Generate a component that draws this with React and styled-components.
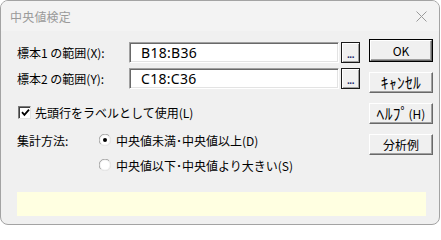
import React, { useState } from "react";
import styled, { createGlobalStyle } from "styled-components";

const GlobalStyle = createGlobalStyle`
  html, body {
    margin: 0;
    padding: 0;
    background: #ffffff;
  }
  * {
    box-sizing: border-box;
  }
`;

const jp = `"Noto Sans CJK JP", "Noto Sans", sans-serif`;

const App = () => {
  const [useLabel, setUseLabel] = useState(true);
  const [method, setMethod] = useState("D");

  return (
    <>
      <GlobalStyle />
      <Window>
        <TitleBar>
          <Title>中央値検定</Title>
          <CloseBtn aria-label="close">
            <svg width="11" height="11" viewBox="0 0 11 11">
              <path d="M0.5 0.5 L10.5 10.5 M10.5 0.5 L0.5 10.5" stroke="#9a9a9a" strokeWidth="1" />
            </svg>
          </CloseBtn>
        </TitleBar>

        <Body>
          <TopSection>
            <FormColumn>
              <FieldRow>
                <FieldLabel>標本1 の範囲(X):</FieldLabel>
                <RangeInput defaultValue="B18:B36" />
                <BrowseBtn>...</BrowseBtn>
              </FieldRow>
              <FieldRow $gap={5}>
                <FieldLabel>標本2 の範囲(Y):</FieldLabel>
                <RangeInput defaultValue="C18:C36" />
                <BrowseBtn>...</BrowseBtn>
              </FieldRow>

              <CheckRow onClick={() => setUseLabel(!useLabel)}>
                <CheckBox>
                  {useLabel && (
                    <svg width="9" height="9" viewBox="0 0 9 9">
                      <path d="M1 4.2 L3.4 6.8 L8 1.6" stroke="#000" strokeWidth="1.8" fill="none" />
                    </svg>
                  )}
                </CheckBox>
                <OptionText>先頭行をラベルとして使用(L)</OptionText>
              </CheckRow>

              <RadioRow $top={12} onClick={() => setMethod("D")}>
                <MethodLabel>集計方法:</MethodLabel>
                <Radio checked={method === "D"} />
                <OptionText>中央値未満･中央値以上(D)</OptionText>
              </RadioRow>
              <RadioRow $top={9} onClick={() => setMethod("S")}>
                <MethodLabel />
                <Radio checked={method === "S"} />
                <OptionText>中央値以下･中央値より大きい(S)</OptionText>
              </RadioRow>
            </FormColumn>

            <ButtonColumn>
              <DefaultFrame>
                <DialogBtn>OK</DialogBtn>
              </DefaultFrame>
              <DialogBtn>
                <Kana>ｷｬﾝｾﾙ</Kana>
              </DialogBtn>
              <DialogBtn>
                <Kana>ﾍﾙﾌﾟ</Kana>(H)
              </DialogBtn>
              <DialogBtn>分析例</DialogBtn>
            </ButtonColumn>
          </TopSection>

          <MessageBox />
        </Body>
      </Window>
    </>
  );
};

const Radio = ({ checked }) => (
  <RadioWrap>
    <svg width="12" height="12" viewBox="0 0 12 12">
      <path d="M10.2 1.8 A5.5 5.5 0 0 0 1.8 10.2" stroke="#a0a0a0" strokeWidth="1" fill="none" />
      <path d="M1.8 10.2 A5.5 5.5 0 0 0 10.2 1.8" stroke="#e3e3e3" strokeWidth="1" fill="none" />
      <circle cx="6" cy="6" r="4.5" fill="#ffffff" />
      {checked && <circle cx="6" cy="6" r="2" fill="#000000" />}
    </svg>
  </RadioWrap>
);

const Window = styled.div`
  width: 440px;
  height: 225px;
  border: 1px solid #a3a3a3;
  border-radius: 8px;
  background: #f0f0f0;
  overflow: hidden;
  display: flex;
  flex-direction: column;
  font-family: ${jp};
  color: #000;
`;

const TitleBar = styled.div`
  height: 30px;
  flex: 0 0 30px;
  background: #f3f3f3;
  display: flex;
  align-items: center;
  justify-content: space-between;
  padding: 0 9px 0 9px;
`;

const Title = styled.span`
  font-size: 12px;
  color: #9a9a9a;
  letter-spacing: 0.2px;
`;

const CloseBtn = styled.div`
  width: 11px;
  height: 11px;
  display: flex;
  margin-right: 3px;
`;

const Body = styled.div`
  flex: 1;
  display: flex;
  flex-direction: column;
  padding: 8px 5px 0 16px;
`;

const TopSection = styled.div`
  display: flex;
  align-items: flex-start;
  gap: 9px;
`;

const FormColumn = styled.div`
  width: 343px;
  display: flex;
  flex-direction: column;
  margin-top: 3px;
`;

const FieldRow = styled.div`
  display: flex;
  align-items: center;
  height: 21px;
  margin-top: ${(p) => p.$gap || 0}px;
`;

const FieldLabel = styled.span`
  width: 112px;
  font-size: 12px;
  white-space: nowrap;
`;

const RangeInput = styled.input`
  width: 210px;
  height: 21px;
  padding: 0 0 0 11px;
  font-family: "Noto Sans", "Open Sans", sans-serif;
  font-size: 14px;
  color: #000;
  background: #ffffff;
  border-style: solid;
  border-width: 1px;
  border-color: #a0a0a0 #ffffff #ffffff #a0a0a0;
  box-shadow: inset 1px 1px 0 #696969, inset -1px -1px 0 #e3e3e3;
  outline: none;
  letter-spacing: 0.3px;
`;

const BrowseBtn = styled.div`
  width: 19px;
  height: 21px;
  margin-left: 2px;
  border: 1px solid #1a1a1a;
  background: #f0f0f0;
  box-shadow: inset 1px 1px 0 #ffffff, inset -1px -1px 0 #a0a0a0;
  display: flex;
  align-items: flex-end;
  justify-content: center;
  padding-bottom: 3px;
  font-family: "Liberation Sans", sans-serif;
  font-size: 10px;
  font-weight: bold;
  line-height: 8px;
  color: #1c2a6b;
  letter-spacing: -0.5px;
`;

const CheckRow = styled.div`
  display: flex;
  align-items: center;
  height: 16px;
  margin-top: 15px;
  padding-left: 1px;
  gap: 4px;
  cursor: default;
`;

const CheckBox = styled.div`
  width: 13px;
  height: 13px;
  background: #ffffff;
  border-style: solid;
  border-width: 1px;
  border-color: #7a7a7a #e3e3e3 #e3e3e3 #7a7a7a;
  box-shadow: inset 1px 1px 0 #404040;
  display: flex;
  align-items: center;
  justify-content: center;
  padding: 1px 0 0 1px;
`;

const OptionText = styled.span`
  font-size: 12px;
  white-space: nowrap;
`;

const RadioRow = styled.div`
  display: flex;
  align-items: center;
  height: 16px;
  margin-top: ${(p) => p.$top}px;
  cursor: default;
`;

const MethodLabel = styled.span`
  width: 82px;
  font-size: 12px;
  white-space: nowrap;
`;

const RadioWrap = styled.div`
  width: 12px;
  height: 12px;
  margin-right: 5px;
  display: flex;
`;

const ButtonColumn = styled.div`
  width: 64px;
  display: flex;
  flex-direction: column;
  gap: 10px;
`;

const DefaultFrame = styled.div`
  border: 1px solid #000;
  display: flex;
  & > div {
    width: 62px;
  }
`;

const DialogBtn = styled.div`
  width: 64px;
  height: 21px;
  background: #f0f0f0;
  border-style: solid;
  border-width: 1px;
  border-color: #ffffff #696969 #696969 #ffffff;
  box-shadow: inset -1px -1px 0 #a0a0a0;
  display: flex;
  align-items: center;
  justify-content: center;
  font-size: 12px;
  line-height: 1;
  white-space: nowrap;
`;

const Kana = styled.span`
  font-size: 15.5px;
  line-height: 1;
  letter-spacing: 0.3px;
`;

const MessageBox = styled.div`
  height: 24px;
  margin: 19px 8px 0 0;
  background: #ffffe1;
`;

export default App;
